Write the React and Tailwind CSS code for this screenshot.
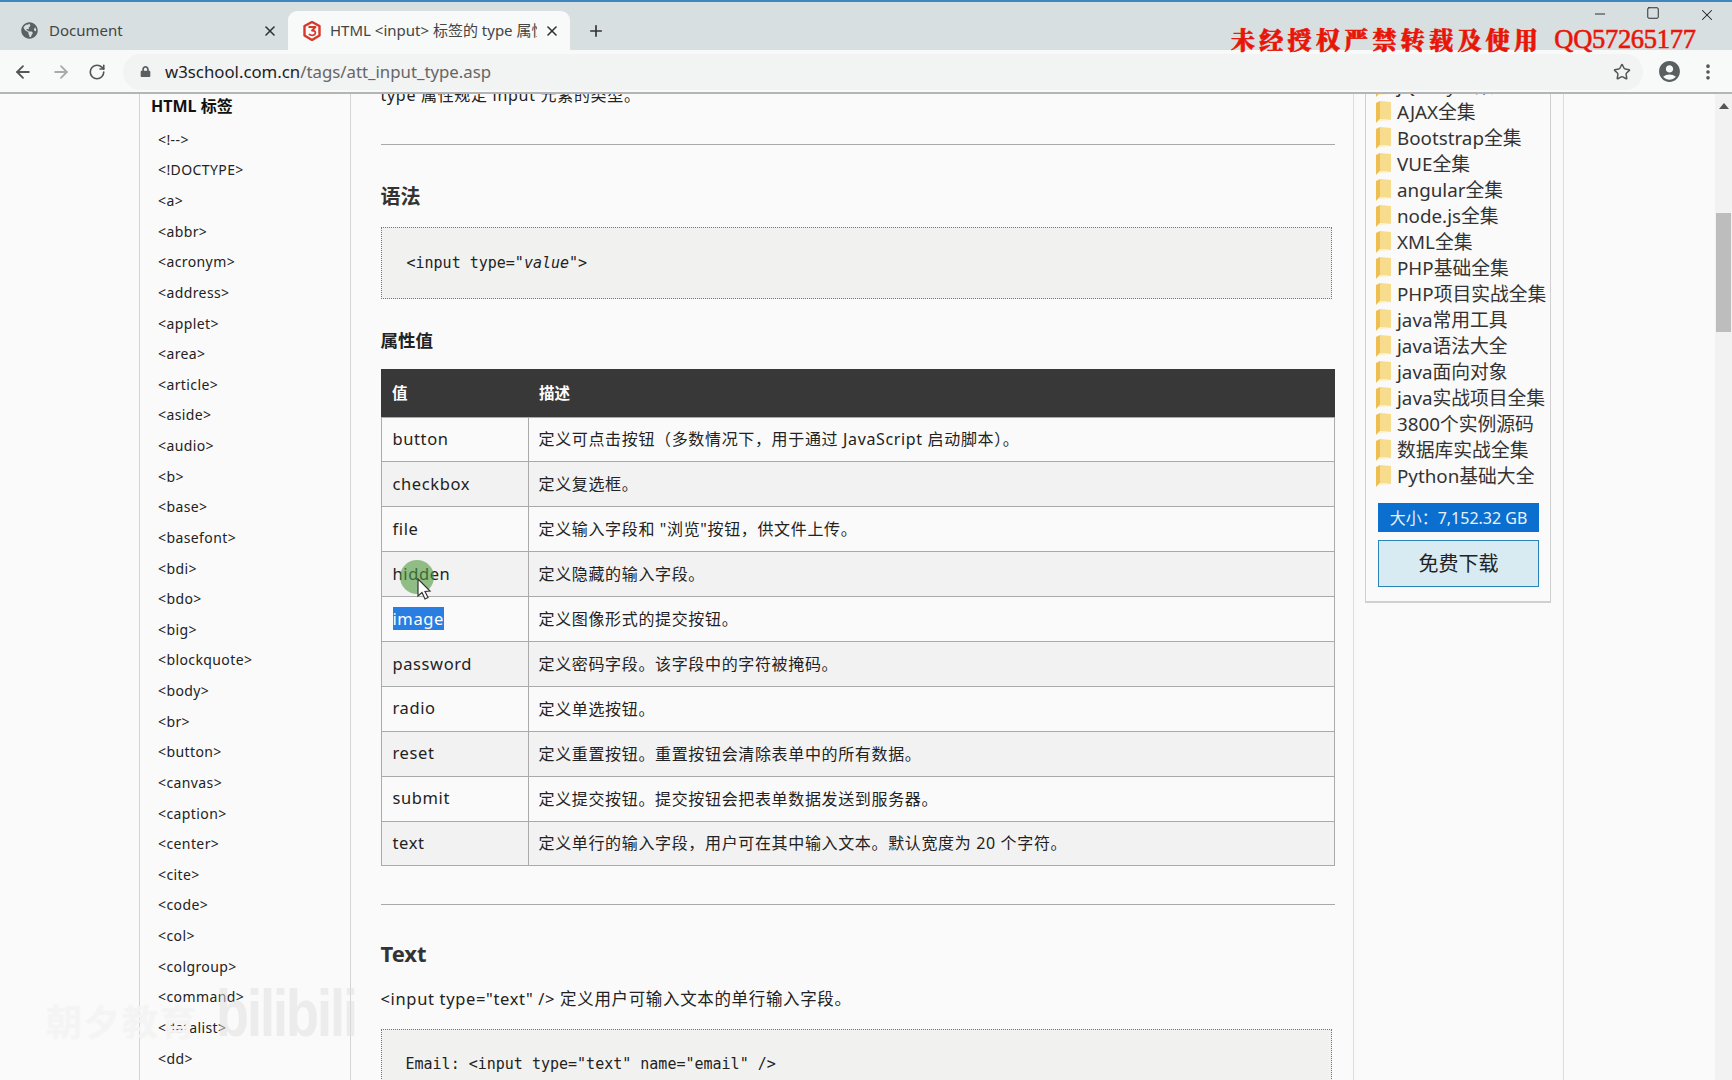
import { ArrowLeft, ArrowRight, RotateCw, Star, Plus, X, Minus, Square, EllipsisVertical } from "lucide-react";
import { FaGlobeAmericas, FaLock } from "react-icons/fa";
import { MdAccountCircle } from "react-icons/md";

const SANS = "font-['Noto_Sans','Noto_Sans_CJK_SC',sans-serif]";
const MONO = "font-['DejaVu_Sans_Mono','Noto_Sans_CJK_SC',monospace]";

const TAGS = [
  "<!-->", "<!DOCTYPE>", "<a>", "<abbr>", "<acronym>", "<address>", "<applet>", "<area>",
  "<article>", "<aside>", "<audio>", "<b>", "<base>", "<basefont>", "<bdi>", "<bdo>",
  "<big>", "<blockquote>", "<body>", "<br>", "<button>", "<canvas>", "<caption>", "<center>",
  "<cite>", "<code>", "<col>", "<colgroup>", "<command>", "<datalist>", "<dd>",
];

const ROWS = [
  ["button", "定义可点击按钮（多数情况下，用于通过 JavaScript 启动脚本）。"],
  ["checkbox", "定义复选框。"],
  ["file", '定义输入字段和 "浏览"按钮，供文件上传。'],
  ["hidden", "定义隐藏的输入字段。"],
  ["image", "定义图像形式的提交按钮。"],
  ["password", "定义密码字段。该字段中的字符被掩码。"],
  ["radio", "定义单选按钮。"],
  ["reset", "定义重置按钮。重置按钮会清除表单中的所有数据。"],
  ["submit", "定义提交按钮。提交按钮会把表单数据发送到服务器。"],
  ["text", "定义单行的输入字段，用户可在其中输入文本。默认宽度为 20 个字符。"],
];

const DOWNLOADS = [
  "jQuery全集", "AJAX全集", "Bootstrap全集", "VUE全集", "angular全集", "node.js全集", "XML全集",
  "PHP基础全集", "PHP项目实战全集", "java常用工具", "java语法大全", "java面向对象",
  "java实战项目全集", "3800个实例源码", "数据库实战全集", "Python基础大全",
];

function Folder() {
  return (
    <svg width="16" height="24" viewBox="0 0 16 24" className="shrink-0">
      <path d="M0 3 L4 1 L4 19 L0 23 Z" fill="#eebf50" />
      <path d="M4 1 L15 2 L15 20 L4 19 Z" fill="#f7dc8e" />
      <path d="M0 23 L4 19 L15 20 L3 21 Z" fill="#fbeec4" />
    </svg>
  );
}

function W3Logo() {
  return (
    <svg width="18" height="20" viewBox="0 0 18 20" fill="none">
      <path d="M9 1 L16.5 5 L16.5 14.5 L9 19 L1.5 14.5 L1.5 5 Z" stroke="#d6392b" strokeWidth="2.4" strokeLinejoin="round" />
      <path d="M5.5 6 L12.5 6 L9 9.5 C12 9.5 13 11 12 13 C11 14.8 7.5 14.8 6 13" stroke="#d6392b" strokeWidth="1.8" strokeLinejoin="round" />
    </svg>
  );
}

function BrowserChrome() {
  return (
    <div className="relative border-b-2 border-[#b4b6b6]">
      <div className="h-[2px] bg-[#3f85c0]" />
      <div className="flex h-[48px] items-end bg-[#d7dfe0] text-[15px] text-[#444]">
        <div className="flex h-[39px] w-[288px] items-center pl-[21px] pr-[10px]">
          <FaGlobeAmericas className="size-[17px] text-[#5a6063]" />
          <span className="ml-[11px] flex-1">Document</span>
          <X className="size-[16px] text-[#333]" strokeWidth={2.4} />
        </div>
        <div className="flex h-[39px] w-[282px] items-center rounded-t-[9px] bg-[#f8f9f9] pl-[15px]">
          <W3Logo />
          <span className="ml-[9px] w-[207px] overflow-hidden whitespace-nowrap">HTML &lt;input&gt; 标签的 type 属性</span>
          <X className="ml-[7px] size-[16px] text-[#333]" strokeWidth={2.4} />
        </div>
        <div className="flex h-[39px] items-center pl-[17px]">
          <Plus className="size-[18px] text-[#333]" strokeWidth={2.2} />
        </div>
        <div className="ml-auto flex h-[48px] items-start pr-[16px] pt-[4px] text-[#222]">
          <Minus className="size-[16px]" strokeWidth={1.4} />
          <Square className="ml-[38px] size-[14px]" strokeWidth={1.6} />
          <X className="ml-[38px] size-[18px]" strokeWidth={1.4} />
        </div>
      </div>
      <div className="flex h-[42px] items-center bg-[#f8f9f9] pl-[13px] pr-[14px] pt-[1px]">
        <ArrowLeft className="size-[20px] text-[#555]" strokeWidth={2.2} />
        <ArrowRight className="ml-[18px] size-[20px] text-[#a8abad]" strokeWidth={2.2} />
        <RotateCw className="ml-[17px] size-[18px] text-[#555]" strokeWidth={2.2} />
        <div className="ml-[17px] flex h-[36px] flex-1 items-center rounded-full bg-[#f2f3f3] pl-[17px]">
          <FaLock className="size-[11px] text-[#5a5f62]" />
          <span className="ml-[14px] text-[16.8px] text-[#222]">
            w3school.com.cn<span className="text-[#666]">/tags/att_input_type.asp</span>
          </span>
          <Star className="ml-auto mr-[12px] size-[18px] text-[#555]" strokeWidth={2} />
        </div>
        <MdAccountCircle className="ml-[14px] size-[25px] text-[#5a5f62]" />
        <EllipsisVertical className="ml-[16px] size-[20px] text-[#555]" strokeWidth={2.4} />
      </div>
      <div className="absolute left-[1231px] top-[21px] flex items-center whitespace-nowrap text-[#e81608] [-webkit-text-stroke:0.6px_#e81608]">
        <span className="font-['Noto_Serif_CJK_SC','Noto_Sans_CJK_SC',serif] text-[24px] font-black tracking-[4.3px]">未经授权严禁转载及使用</span>
        <span className="ml-[12px] font-['Liberation_Serif',serif] text-[26.5px] leading-none tracking-[-0.3px]">QQ57265177</span>
      </div>
    </div>
  );
}

function Sidebar() {
  return (
    <aside className="ml-[139px] w-[212px] shrink-0 border-x border-[#d4d4d4] pl-[11px] text-[14px] text-[#222]">
      <h2 className="flex h-[23px] items-center text-[16px] font-bold text-[#111]">HTML 标签</h2>
      <ul className="pt-[7px] pl-[7px]">
        {TAGS.map((tag) => (
          <li key={tag} className="flex h-[30.63px] items-center tracking-[0.4px]">{tag}</li>
        ))}
      </ul>
    </aside>
  );
}

function Content() {
  return (
    <main className="w-[1002px] shrink-0 pl-[29.5px] pr-[18px] text-[#222]">
      <p className="-mt-[11px] h-[24px] text-[16px] leading-[24px] tracking-[0.7px]">type 属性规定 input 元素的类型。</p>
      <div className="mt-[37px] border-t border-[#a8a8a8]" />
      <h2 className="mt-[37px] h-[30px] text-[20px] font-bold leading-[30px] text-[#333]">语法</h2>
      <div className={`mt-[15px] flex h-[72px] w-[951px] items-center border border-dotted border-[#777] bg-[#f1f1ef] pl-[25px] text-[15px] ${MONO}`}>
        {'<input type="'}<i>value</i>{'">'}
      </div>
      <h3 className="mt-[27px] h-[28px] text-[17.5px] font-bold leading-[28px] text-[#222]">属性值</h3>
      <table className="mt-[15px] w-full table-fixed border-collapse text-[16.5px]">
        <colgroup>
          <col className="w-[147px]" />
          <col />
        </colgroup>
        <thead>
          <tr className="h-[48px] bg-[#383838] text-left text-[15.5px] font-bold text-white">
            <th className="pl-[11px] pt-[1px]">值</th>
            <th className="pl-[11px] pt-[1px]">描述</th>
          </tr>
        </thead>
        <tbody>
          {ROWS.map(([value, desc], i) => (
            <tr key={value} className={`h-[44.9px] ${i % 2 ? "bg-[#f2f2f2]" : "bg-[#fafafa]"}`}>
              <td className="border border-[#aaa] pl-[11px] tracking-[0.6px]">
                {value === "image" ? <span className="bg-[#2a7de1] text-white">image</span> : value}
              </td>
              <td className="border border-[#aaa] pl-[10px] text-[16px] tracking-[0.65px]">{desc}</td>
            </tr>
          ))}
        </tbody>
      </table>
      <div className="mt-[38px] border-t border-[#a8a8a8]" />
      <h2 className="mt-[32px] h-[32px] text-[22px] font-bold leading-[32px] text-[#333]">Text</h2>
      <p className="mt-[17px] h-[26px] text-[16.5px] leading-[26px] tracking-[0.65px]">{'<input type="text" /> 定义用户可输入文本的单行输入字段。'}</p>
      <div className={`mt-[17px] h-[72px] w-[951px] border border-dotted border-[#777] bg-[#f1f1ef] pl-[24px] pt-[23px] text-[15px] ${MONO}`}>
        {'Email: <input type="text" name="email" />'}
      </div>
    </main>
  );
}

function RightColumn() {
  return (
    <div className="w-[211px] shrink-0 border-x border-[#dcdcdc] pl-[11px] pr-[12px]">
      <div className="-mt-[21px] h-[530px] border-x border-b-2 border-[#d0d0d0] pl-[10px]">
        <ul>
          {DOWNLOADS.map((name) => (
            <li key={name} className="flex h-[26px] items-center gap-[5px] whitespace-nowrap text-[18.8px] text-[#333]">
              <Folder />
              <span>{name}</span>
            </li>
          ))}
        </ul>
        <div className="ml-[2px] mt-[14px] flex h-[29px] w-[161px] items-center justify-center bg-[#0b6fcf] text-[16px] text-[#e8f2fb]">大小：7,152.32 GB</div>
        <div className="ml-[2px] mt-[8px] flex h-[47px] w-[161px] items-center justify-center border-[1.5px] border-[#2b84b8] bg-[#d8ebf3] text-[20px] text-[#222]">免费下载</div>
      </div>
    </div>
  );
}

function Scrollbar() {
  return (
    <div className="ml-auto flex w-[17px] shrink-0 flex-col items-center bg-[#f2f2f2]">
      <svg width="10" height="6" viewBox="0 0 10 6" className="mt-[9px]"><path d="M5 0 L10 6 L0 6 Z" fill="#555" /></svg>
      <div className="mt-[104px] h-[119px] w-[15px] bg-[#bdbdbd]" />
    </div>
  );
}

export default function App() {
  return (
    <div className={`relative h-[1080px] w-[1732px] overflow-hidden bg-[#fafafa] ${SANS}`}>
      <BrowserChrome />
      <div className="flex h-[986px] overflow-hidden">
        <Sidebar />
        <Content />
        <RightColumn />
        <Scrollbar />
      </div>

      {/* click marker + cursor */}
      <div className="absolute left-[400px] top-[560px] size-[34px] rounded-full bg-[#4c9a3c]/60" />
      <svg width="16" height="24" viewBox="0 0 16 24" className="absolute left-[417px] top-[578px]">
        <path d="M1 1 L1 18 L5 14.5 L8 21 L11 19.5 L8 13.5 L13 13 Z" fill="#fff" stroke="#333" strokeWidth="1.2" />
      </svg>

      {/* video watermarks */}
      <div className="absolute left-[46px] top-[996px] text-[36px] font-bold tracking-[2px] text-white/40 [text-shadow:0_0_1px_#eeeeee]">朝夕教育</div>
      <div className="absolute left-[216px] top-[972px] origin-center scale-y-[1.25] font-['Liberation_Sans',sans-serif] text-[54px] font-bold tracking-[-2px] text-[#ddd]/50">bilibili</div>
    </div>
  );
}
